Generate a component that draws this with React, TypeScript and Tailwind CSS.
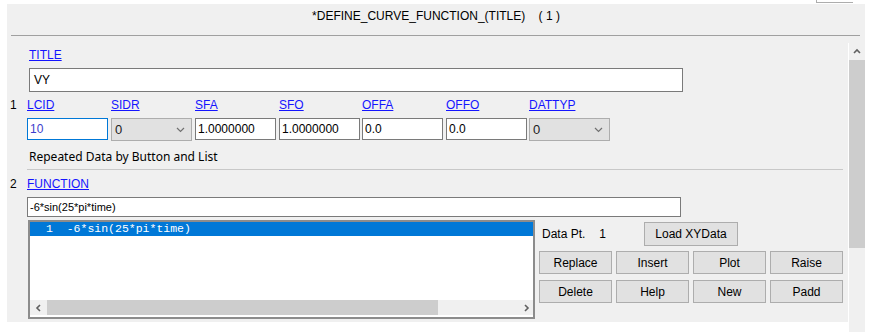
import React from "react";

// column left margins, matching the uneven spacing of the form
const cols = [
    { label: "LCID", ml: "ml-0" },
    { label: "SIDR", ml: "ml-[3px]" },
    { label: "SFA", ml: "ml-[3px]" },
    { label: "SFO", ml: "ml-[3px]" },
    { label: "OFFA", ml: "ml-[2px]" },
    { label: "OFFO", ml: "ml-[3px]" },
    { label: "DATTYP", ml: "ml-[2px]" },
];

const Chevron = ({ dir }: { dir: "up" | "down" | "left" | "right" }) => {
    const d = {
        up: "M1 5 L4 2 L7 5",
        down: "M1 2 L4 5 L7 2",
        left: "M5 1 L2 4 L5 7",
        right: "M3 1 L6 4 L3 7",
    }[dir];
    return (
        <svg width="8" height="8" viewBox="0 0 8 8" fill="none">
            <path d={d} stroke="#606060" strokeWidth="1.6" />
        </svg>
    );
};

const Select = ({ ml }: { ml: string }) => (
    <div className={`${ml} w-[81px] h-[23px] bg-[#e1e1e1] border border-[#adadad] flex items-center justify-between pl-[3px] pr-[6px]`}>
        <span className="text-[13px] text-[#222]">0</span>
        <svg width="9" height="6" viewBox="0 0 9 6" fill="none">
            <path d="M1 1 L4.5 4.5 L8 1" stroke="#707070" strokeWidth="1.2" />
        </svg>
    </div>
);

const Input = ({ value, ml, focus }: { value: string; ml: string; focus?: boolean }) => (
    <div
        className={
            `${ml} w-[81px] h-[22px] bg-white border flex items-center px-[2px] text-[12px] ` +
            (focus ? "border-[#0078d7] text-[#3d3dcc]" : "border-[#7a7a7a] text-black")
        }
    >
        {value}
    </div>
);

const Btn = ({ label, w = "w-[73px]", h = "h-[23px]" }: { label: string; w?: string; h?: string }) => (
    <div className={`${w} ${h} bg-[#e1e1e1] border border-[#adadad] flex items-center justify-center text-[12px] text-black`}>
        {label}
    </div>
);

const App = () => {
    return (
        <div className="w-[870px] h-[332px] bg-white overflow-hidden font-['Liberation_Sans',Arial,sans-serif] text-[12px] text-black">
            {/* top fragment */}
            <div className="h-[4px] flex">
                <div className="ml-[816px] w-[37px] h-[3px] border-l border-b border-[#adadad]" />
            </div>

            <div className="ml-[7px] w-[858px]">
                {/* Header */}
                <div className="h-[39px] bg-[#f0f0f0] flex flex-col">
                    <div className="h-[24px] flex items-center justify-center">
                        *DEFINE_CURVE_FUNCTION_(TITLE)&nbsp;&nbsp;&nbsp;&nbsp;( 1 )
                    </div>
                    <div className="mt-[7px] ml-[4px] w-[849px] h-px bg-[#a0a0a0]" />
                </div>

                {/* Body */}
                <div className="flex">
                    <div className="w-[841px] h-[279px] bg-[#f0f0f0] flex flex-col">
                        <div className="mt-[4px] h-[16px] pl-[22px] leading-[16px]">
                            <span className="text-[#1515ff] underline">TITLE</span>
                        </div>
                        <div className="mt-[5px] ml-[22px] w-[654px] h-[24px] bg-white border border-[#7a7a7a] flex items-center px-[4px]">
                            VY
                        </div>

                        {/* Row 1 */}
                        <div className="mt-[5px] h-[16px] flex leading-[16px]">
                            <div className="w-[20px] pl-[3px]">1</div>
                            {cols.map((c) => (
                                <div key={c.label} className={`${c.ml} w-[81px]`}>
                                    <span className="text-[#1515ff] underline">{c.label}</span>
                                </div>
                            ))}
                        </div>
                        <div className="mt-[5px] flex items-start">
                            <div className="w-[20px]" />
                            <Input value="10" ml={cols[0].ml} focus />
                            <Select ml={cols[1].ml} />
                            <Input value="1.0000000" ml={cols[2].ml} />
                            <Input value="1.0000000" ml={cols[3].ml} />
                            <Input value="0.0" ml={cols[4].ml} />
                            <Input value="0.0" ml={cols[5].ml} />
                            <Select ml={cols[6].ml} />
                        </div>

                        <div className="mt-[8px] h-[16px] pl-[22px] leading-[16px] font-['Noto_Sans',sans-serif]">
                            Repeated Data by Button and List
                        </div>
                        <div className="mt-[4px] ml-[20px] w-[816px] h-px bg-[#c8c8c8]" />

                        {/* Row 2 */}
                        <div className="mt-[6px] h-[16px] flex leading-[16px]">
                            <div className="w-[20px] pl-[3px]">2</div>
                            <span className="text-[#1515ff] underline">FUNCTION</span>
                        </div>
                        <div className="mt-[5px] ml-[20px] w-[654px] h-[20px] bg-white border border-[#7a7a7a] flex items-center px-[2px] text-[11px]">
                            -6*sin(25*pi*time)
                        </div>

                        <div className="mt-[3px] flex">
                            {/* List */}
                            <div className="ml-[21px] w-[507px] h-[99px] bg-white border-2 border-[#8c8c8c] flex flex-col">
                                <div className="h-[14px] bg-[#0078d7] text-white font-['Liberation_Mono',monospace] text-[11.5px] leading-[14px] whitespace-pre pl-[16px]">
                                    1  -6*sin(25*pi*time)
                                </div>
                                <div className="flex-1" />
                                <div className="h-[15px] flex bg-[#f0f0f0]">
                                    <div className="w-[17px] flex items-center justify-center">
                                        <Chevron dir="left" />
                                    </div>
                                    <div className="w-[391px] bg-[#cdcdcd]" />
                                    <div className="flex-1 flex items-center justify-end pr-[3px]">
                                        <Chevron dir="right" />
                                    </div>
                                </div>
                                <div className="h-[2px]" />
                            </div>

                            {/* Buttons */}
                            <div className="ml-[4px] flex flex-col">
                                <div className="mt-[2px] flex items-center">
                                    <div className="w-[105px] pl-[3px] flex">
                                        <span>Data Pt.</span>
                                        <span className="ml-[14px]">1</span>
                                    </div>
                                    <Btn label="Load XYData" w="w-[94px]" h="h-[24px]" />
                                </div>
                                <div className="mt-[5px] flex gap-[4px]">
                                    <Btn label="Replace" />
                                    <Btn label="Insert" />
                                    <Btn label="Plot" />
                                    <Btn label="Raise" />
                                </div>
                                <div className="mt-[6px] flex gap-[4px]">
                                    <Btn label="Delete" />
                                    <Btn label="Help" />
                                    <Btn label="New" />
                                    <Btn label="Padd" />
                                </div>
                            </div>
                        </div>
                    </div>

                    {/* Vertical scrollbar */}
                    <div className="ml-px w-[16px] h-[289px] bg-[#f0f0f0] flex flex-col">
                        <div className="h-[17px] flex items-center justify-center">
                            <Chevron dir="up" />
                        </div>
                        <div className="h-[188px] bg-[#cdcdcd]" />
                    </div>
                </div>
            </div>
        </div>
    );
};

export default App;
